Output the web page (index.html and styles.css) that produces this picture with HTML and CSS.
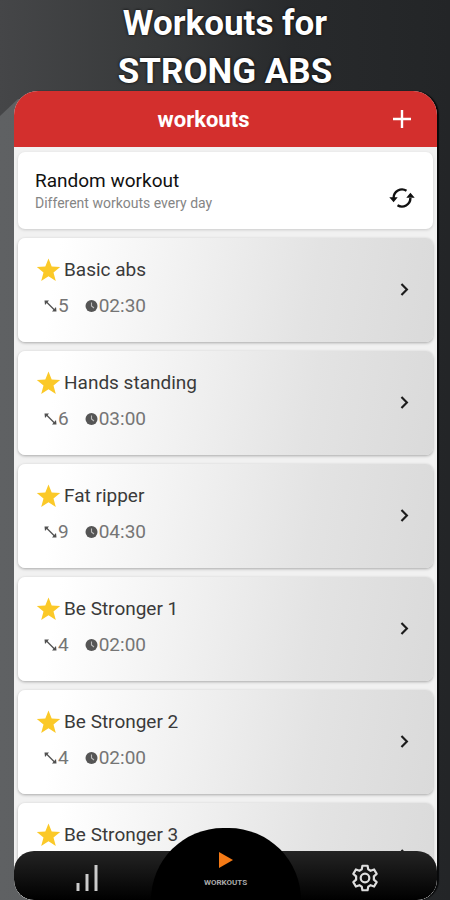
FILE: index.html
```html
<!DOCTYPE html>
<html lang="en">
<head>
<meta charset="utf-8">
<meta name="viewport" content="width=device-width, initial-scale=1">
<title>Workouts for STRONG ABS</title>
<link rel="stylesheet" href="styles.css">
</head>
<body>
<svg class="defs" aria-hidden="true">
  <symbol id="star" viewBox="0 0 24 24"><path fill="#fbc928" d="M12 .6l3.200 8 8.500.5-6.700 5.300 2.300 8.600-7.300-4.800-7.300 4.800L7 14.400.3 9.100l8.500-.5z"/></symbol>
  <symbol id="moves" viewBox="0 0 12 12"><path d="M2 2l8 8" stroke="#505050" stroke-width="1.300"/><path d="M0 .5h4.500L.5 5zM12 11.500H7.500l4-4.500z" fill="#505050"/></symbol>
  <symbol id="clock" viewBox="0 0 12 12"><circle cx="6" cy="6" r="6" fill="#555"/><path d="M6 2.500V6l2.500 2" fill="none" stroke="#bbb" stroke-width="1.100"/></symbol>
  <symbol id="chevron" viewBox="0 0 8 12"><path d="M1.200 1l5 5-5 5" fill="none" stroke="#1c1c1c" stroke-width="2"/></symbol>
</svg>
<h1 class="headline">Workouts for<br>STRONG ABS</h1>
<div class="phone">
  <header class="bar">
    <h2 class="bar-title">workouts</h2>
    <button class="icon-button" aria-label="Add workout"><svg width="18" height="18" viewBox="0 0 18 18"><path d="M9 0v18M0 9h18" stroke="#fff" stroke-width="2.400"/></svg></button>
  </header>
  <main class="list">
    <section class="card random">
      <div>
        <h3 class="name">Random workout</h3>
        <p class="note">Different workouts every day</p>
      </div>
      <button class="icon-button refresh" aria-label="Shuffle workout"><svg width="26" height="22" viewBox="0 0 26 22"><g fill="none" stroke="#111" stroke-width="2.400"><path d="M4.600 11A8.500 8.500 0 0 1 17.500 3.700"/><path d="M21.400 11A8.500 8.500 0 0 1 8.500 18.300"/></g><path d="M.3 10.300h8.400L4.600 15.300zM25.700 10.700h-8.400l4.100-5z" fill="#111"/></svg></button>
    </section>
    <a class="card" href="#basic"><div><h3 class="name"><svg class="star"><use href="#star"/></svg>Basic abs</h3><p class="stats"><span><svg class="mini"><use href="#moves"/></svg>5</span><span><svg class="mini"><use href="#clock"/></svg>02:30</span></p></div><svg class="chevron"><use href="#chevron"/></svg></a>
    <a class="card" href="#hands"><div><h3 class="name"><svg class="star"><use href="#star"/></svg>Hands standing</h3><p class="stats"><span><svg class="mini"><use href="#moves"/></svg>6</span><span><svg class="mini"><use href="#clock"/></svg>03:00</span></p></div><svg class="chevron"><use href="#chevron"/></svg></a>
    <a class="card" href="#ripper"><div><h3 class="name"><svg class="star"><use href="#star"/></svg>Fat ripper</h3><p class="stats"><span><svg class="mini"><use href="#moves"/></svg>9</span><span><svg class="mini"><use href="#clock"/></svg>04:30</span></p></div><svg class="chevron"><use href="#chevron"/></svg></a>
    <a class="card" href="#stronger1"><div><h3 class="name"><svg class="star"><use href="#star"/></svg>Be Stronger 1</h3><p class="stats"><span><svg class="mini"><use href="#moves"/></svg>4</span><span><svg class="mini"><use href="#clock"/></svg>02:00</span></p></div><svg class="chevron"><use href="#chevron"/></svg></a>
    <a class="card" href="#stronger2"><div><h3 class="name"><svg class="star"><use href="#star"/></svg>Be Stronger 2</h3><p class="stats"><span><svg class="mini"><use href="#moves"/></svg>4</span><span><svg class="mini"><use href="#clock"/></svg>02:00</span></p></div><svg class="chevron"><use href="#chevron"/></svg></a>
    <a class="card" href="#stronger3"><div><h3 class="name"><svg class="star"><use href="#star"/></svg>Be Stronger 3</h3></div><svg class="chevron"><use href="#chevron"/></svg></a>
  </main>
  <nav class="tabs">
    <a class="tab" href="#stats" aria-label="Statistics"><svg width="22" height="26" viewBox="0 0 22 26"><path d="M2 26v-8M11 26V9M20 26V0" stroke="#ccc" stroke-width="3"/></svg></a>
    <a class="tab current" href="#workouts"><svg width="14" height="16" viewBox="0 0 14 16"><path d="M0 0l14 8-14 8z" fill="#f47a16"/></svg><span>WORKOUTS</span></a>
    <a class="tab" href="#settings" aria-label="Settings"><svg width="28" height="28" viewBox="0 0 24 24" fill="none" stroke="#ddd" stroke-width="1.900" stroke-linejoin="round"><circle cx="12" cy="12" r="3.700"/><path d="M9.800 1.500h4.400l.6 3.100 2 1.200 3-1.100 2.200 3.800-2.400 2.100v2.800l2.400 2.100-2.200 3.800-3-1.100-2 1.200-.6 3.100H9.800l-.6-3.100-2-1.200-3 1.100L2 15.500l2.400-2.100v-2.800L2 8.500l2.200-3.800 3 1.100 2-1.200z"/></svg></a>
  </nav>
</div>
</body>
</html>
```
FILE: styles.css
```css
* { box-sizing: border-box; }

body {
  margin: 0;
  height: 100vh;
  overflow: hidden;
  display: flex;
  flex-direction: column;
  background: linear-gradient(to right, #454648, #37393a 35%, #282a2c 65%, #232527);
  font-family: Roboto, "Liberation Sans", sans-serif;
  position: relative;
}

/* Lighter slanted panel behind the phone */
body::before {
  content: "";
  position: absolute;
  z-index: -1;
  top: 99px;
  bottom: 0;
  left: 0;
  width: 50%;
  background: linear-gradient(to right, #5f6163, #5a5c5e);
  clip-path: polygon(0 17px, 18px 0, 100% 0, 100% 100%, 0 100%);
}

h1, h2, h3, p { margin: 0; }
a { color: inherit; text-decoration: none; }
svg { display: block; flex: none; }
.defs { display: none; }

.headline {
  height: 91px;
  color: #fff;
  font-size: 35px;
  line-height: 48px;
  font-weight: 700;
  text-align: center;
  text-shadow: 0 0 3px #000;
}

.phone {
  flex: 1;
  min-height: 0;
  margin: 0 13px 0 14px;
  overflow: hidden;
  position: relative;
  border-radius: 24px 24px 20px 20px;
  background: #f1f1f1;
  box-shadow: 2px 0 1px #08090a;
}

.bar {
  display: flex;
  align-items: center;
  height: 56px;
  padding: 0 26px 0 0;
  background: #d32f2d;
}

.bar-title {
  flex: 1;
  color: #fff;
  font-size: 22px;
  font-weight: 700;
  text-align: center;
}

.icon-button {
  border: 0;
  padding: 0;
  background: none;
}

.list {
  display: flex;
  flex-direction: column;
  gap: 9px;
  padding: 5px 4px 0;
}

.card {
  display: flex;
  flex: none;
  align-items: center;
  justify-content: space-between;
  height: 104px;
  padding: 0 24px 2px 17px;
  border-radius: 7px;
  color: #3a3a3a;
  background: linear-gradient(100deg, #fff 10%, #f0f0f0 42%, #e3e3e3 70%, #dadada);
  box-shadow: 0 1px 3px rgba(0, 0, 0, 0.3);
}

.random {
  height: 77px;
  padding: 0 18px 0 17px;
  color: #111;
  background: #fff;
  box-shadow: 0 1px 3px rgba(0, 0, 0, 0.16);
}

.refresh { margin-top: 14px; }

.name {
  display: flex;
  align-items: center;
  gap: 2px;
  font-size: 19px;
  line-height: 24px;
  font-weight: 400;
}

.note {
  color: #858585;
  font-size: 14px;
  line-height: 20px;
}

.star { width: 27px; height: 24px; }
.mini { width: 13px; height: 12px; }
.chevron { width: 9px; height: 13px; }

.stats {
  display: flex;
  gap: 16px;
  padding: 0 0 2px 9px;
  margin-top: 12px;
  color: #757575;
  font-size: 19px;
  line-height: 24px;
}

.stats span {
  display: flex;
  align-items: center;
  gap: 1px;
}

.card:last-child {
  align-items: flex-start;
  padding-top: 20px;
}

.card:last-child .chevron { margin-top: 26px; }

.tabs {
  position: absolute;
  bottom: 0;
  left: 0;
  right: 0;
  display: grid;
  grid-template-columns: 1fr 150px 1fr;
  height: 49px;
  border-radius: 20px;
  background: linear-gradient(#242424, #000);
}

.tab {
  display: flex;
  align-items: center;
  justify-content: center;
  padding: 5px 8px 0 0;
}

.tab:first-child { padding: 5px 0 0 10px; }

.tab.current {
  flex-direction: column;
  justify-content: flex-start;
  gap: 10px;
  height: 72px;
  margin-top: -23px;
  padding: 24px 0 0;
  border-radius: 75px 75px 0 0;
  background: #000;
  color: #aaa;
  font-size: 8px;
  line-height: 10px;
  font-weight: 700;
}
```
